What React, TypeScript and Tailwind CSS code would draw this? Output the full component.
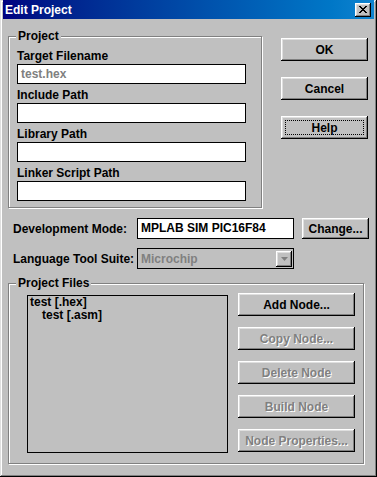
import React from "react"

const RAISED =
  "shadow-[inset_-1px_-1px_0_#000,inset_1px_1px_0_#fff,inset_-2px_-2px_0_#808080,inset_2px_2px_0_#dfdfdf]"

function Btn({
  children,
  disabled,
  focus,
  className = "",
}: {
  children: React.ReactNode
  disabled?: boolean
  focus?: boolean
  className?: string
}) {
  return (
    <div
      className={`relative flex h-[23px] items-center justify-center bg-[#c0c0c0] ${RAISED} ${className} ${
        disabled ? "text-[#808080] [text-shadow:1px_1px_0_#fff]" : "text-black"
      }`}
    >
      {focus && <div className="absolute inset-[4px] border border-dotted border-black" />}
      <span>{children}</span>
    </div>
  )
}

function GroupBox({
  title,
  className = "",
  children,
}: {
  title: string
  className?: string
  children: React.ReactNode
}) {
  return (
    <div
      className={`relative border border-[#808080] shadow-[1px_1px_0_#fff,inset_1px_1px_0_#fff] ${className}`}
    >
      <span className="absolute -top-[8px] left-[7px] bg-[#c0c0c0] px-[2px] leading-[14px]">{title}</span>
      {children}
    </div>
  )
}

function PathField({ label, value, first }: { label: string; value?: string; first?: boolean }) {
  return (
    <div className="flex flex-col">
      <div className={`${first ? "pt-0" : "pt-[4px]"} mb-[1px] leading-[14px]`}>{label}</div>
      <div className="h-[20px] w-[229px] border border-black bg-white px-[3px] leading-[18px] text-[#808080]">
        {value}
      </div>
    </div>
  )
}

export default function App() {
  return (
    <div
      className="flex h-[477px] w-[377px] flex-col bg-[#c0c0c0] px-[3px] pb-[3px] text-[12px] font-bold text-black shadow-[inset_-1px_-1px_0_#000,inset_1px_1px_0_#dfdfdf,inset_-2px_-2px_0_#808080,inset_2px_2px_0_#fff]"
      style={{ fontFamily: '"Liberation Sans", Arial, sans-serif' }}
    >
      {/* title bar */}
      <div className="flex h-[19px] items-center justify-between bg-gradient-to-r from-[#000080] to-[#1084d0] pl-[2px] pr-[3px]">
        <span className="text-[12px] leading-[14px] text-white">Edit Project</span>
        <div className={`flex h-[14px] w-[16px] items-center justify-center bg-[#c0c0c0] ${RAISED}`}>
          <svg width="8" height="7" viewBox="0 0 8 7">
            <path d="M0 0h2v1h1v1h2v-1h1v-1h2v1h-1v1h-1v1h-1v1h1v1h1v1h1v1h-2v-1h-1v-1h-2v1h-1v1h-2v-1h1v-1h1v-1h1v-1h-1v-1h-1v-1h-1z" fill="#000" />
          </svg>
        </div>
      </div>

      {/* top section */}
      <div className="mt-[17px] flex">
        <GroupBox title="Project" className="ml-[5px] w-[254px] pb-[6px] pl-[8px] pt-[12px]">
          <div className="flex flex-col">
            <PathField label="Target Filename" value="test.hex" first />
            <PathField label="Include Path" />
            <PathField label="Library Path" />
            <PathField label="Linker Script Path" />
          </div>
        </GroupBox>
        <div className="ml-[19px] mt-[2px] flex w-[87px] flex-col gap-[16px]">
          <Btn>OK</Btn>
          <Btn>Cancel</Btn>
          <Btn focus>Help</Btn>
        </div>
      </div>

      {/* development mode */}
      <div className="ml-[10px] mt-[10px] flex h-[21px] items-center">
        <span className="w-[124px]">Development Mode:</span>
        <div className="h-[21px] w-[157px] border border-black bg-white px-[3px] leading-[19px]">MPLAB SIM PIC16F84</div>
        <Btn className="ml-[8px] !h-[21px] w-[67px]">Change...</Btn>
      </div>

      {/* language tool suite */}
      <div className="ml-[10px] mt-[9px] flex h-[21px] items-center">
        <span className="w-[124px]">Language Tool Suite:</span>
        <div className="flex h-[21px] w-[157px] items-center justify-between border border-black bg-[#c0c0c0] pl-[3px] pr-[1px]">
          <span className="text-[#808080]">Microchip</span>
          <div className={`flex h-[16px] w-[16px] items-center justify-center bg-[#c0c0c0] ${RAISED}`}>
            <svg width="7" height="4" viewBox="0 0 7 4">
              <path d="M0 0h7l-3.5 4z" fill="#808080" />
            </svg>
          </div>
        </div>
      </div>

      {/* project files */}
      <GroupBox title="Project Files" className="ml-[5px] mt-[14px] flex h-[181px] w-[356px] pl-[18px] pt-[11px]">
        <div className="h-[158px] w-[201px] border border-black px-[2px] leading-[13px]">
          <div>test [.hex]</div>
          <div className="pl-[12px]">test [.asm]</div>
        </div>
        <div className="ml-[10px] -mt-[2px] flex w-[117px] flex-col gap-[11px]">
          <Btn>Add Node...</Btn>
          <Btn disabled>Copy Node...</Btn>
          <Btn disabled>Delete Node</Btn>
          <Btn disabled>Build Node</Btn>
          <Btn disabled>Node Properties...</Btn>
        </div>
      </GroupBox>
    </div>
  )
}
